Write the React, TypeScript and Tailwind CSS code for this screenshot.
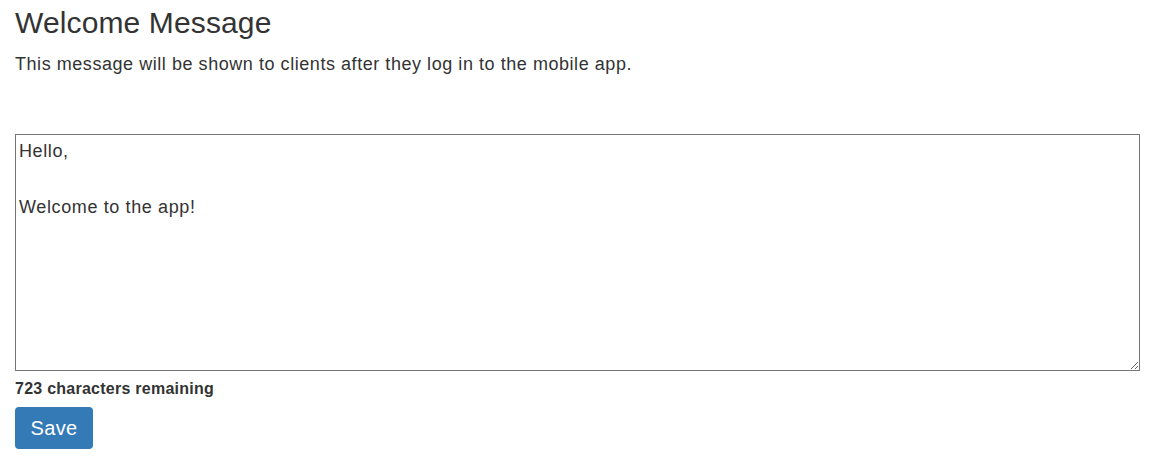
import React from "react";

export default function App() {
  return (
    <div
      className="w-[1160px] h-[458px] bg-white text-[#333333] px-[15px]"
      style={{ fontFamily: '"Liberation Sans", Arial, sans-serif' }}
    >
      <h2 className="pt-[6px] text-[30px] leading-[33px] font-normal tracking-[0.13px]">Welcome Message</h2>
      <p className="mt-[13px] text-[18px] leading-[25.7px] tracking-[0.55px]">
        This message will be shown to clients after they log in to the mobile app.
      </p>
      <textarea
        className="mt-[56px] block w-[1125px] h-[237px] border border-[#767676] px-[3px] py-[2px] text-[18px] leading-[28px] tracking-[0.62px] text-[#333333] outline-none resize-y"
        style={{ fontFamily: '"Liberation Sans", Arial, sans-serif' }}
        defaultValue={"Hello,\n\nWelcome to the app!"}
      />
      <div className="mt-[6px] text-[16px] leading-[23px] font-bold tracking-[0.25px]">723 characters remaining</div>
      <button className="mt-[7px] flex items-center justify-center w-[78px] h-[42px] bg-[#337ab7] text-white text-[20px] leading-[28px] tracking-[0.3px] rounded-[4px]">
        Save
      </button>
    </div>
  );
}
